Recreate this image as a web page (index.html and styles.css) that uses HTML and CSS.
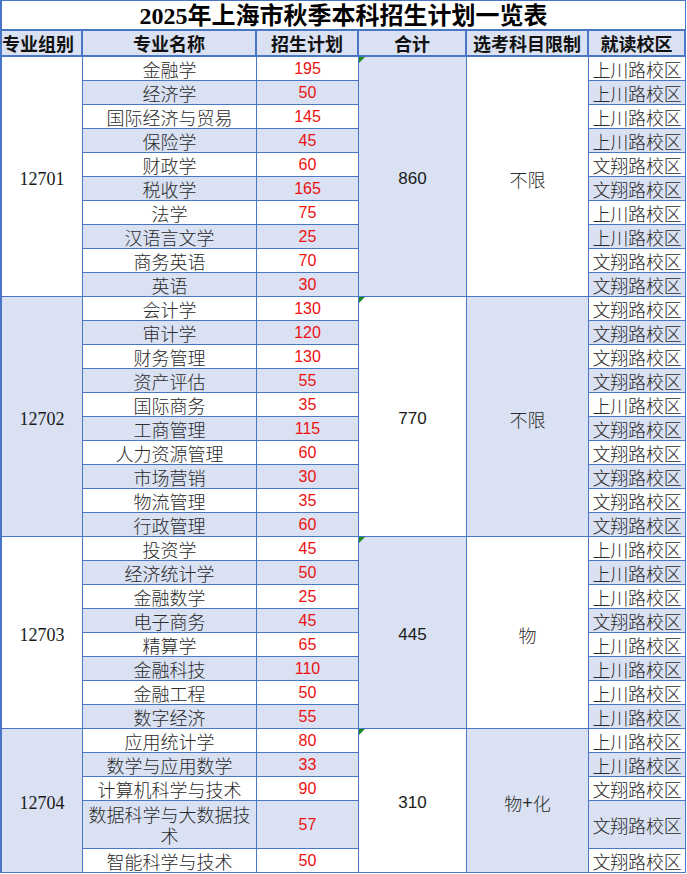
FILE: index.html
```html
<!DOCTYPE html>
<html lang="zh-CN">
<head>
<meta charset="utf-8">
<title>2025年上海市秋季本科招生计划一览表</title>
<link rel="stylesheet" href="styles.css">
</head>
<body>
<div class="sheet">
  <div class="cell title">2025年上海市秋季本科招生计划一览表</div>

  <div class="cell hd c1">专业组别</div>
  <div class="cell hd">专业名称</div>
  <div class="cell hd">招生计划</div>
  <div class="cell hd">合计</div>
  <div class="cell hd">选考科目限制</div>
  <div class="cell hd last">就读校区</div>

  <!-- group 12701 -->
  <div class="cell c1 code span10">12701</div>
  <div class="cell name">金融学</div><div class="cell num">195</div>
  <div class="cell total span10 b tri">860</div>
  <div class="cell req span10">不限</div>
  <div class="cell campus">上川路校区</div>
  <div class="cell name b">经济学</div><div class="cell num b">50</div><div class="cell campus b">上川路校区</div>
  <div class="cell name">国际经济与贸易</div><div class="cell num">145</div><div class="cell campus">上川路校区</div>
  <div class="cell name b">保险学</div><div class="cell num b">45</div><div class="cell campus b">上川路校区</div>
  <div class="cell name">财政学</div><div class="cell num">60</div><div class="cell campus">文翔路校区</div>
  <div class="cell name b">税收学</div><div class="cell num b">165</div><div class="cell campus b">文翔路校区</div>
  <div class="cell name">法学</div><div class="cell num">75</div><div class="cell campus">上川路校区</div>
  <div class="cell name b">汉语言文学</div><div class="cell num b">25</div><div class="cell campus b">上川路校区</div>
  <div class="cell name">商务英语</div><div class="cell num">70</div><div class="cell campus">文翔路校区</div>
  <div class="cell name b">英语</div><div class="cell num b">30</div><div class="cell campus b">文翔路校区</div>

  <!-- group 12702 -->
  <div class="cell c1 code span10 b">12702</div>
  <div class="cell name">会计学</div><div class="cell num">130</div>
  <div class="cell total span10 tri">770</div>
  <div class="cell req span10 b">不限</div>
  <div class="cell campus">文翔路校区</div>
  <div class="cell name b">审计学</div><div class="cell num b">120</div><div class="cell campus b">文翔路校区</div>
  <div class="cell name">财务管理</div><div class="cell num">130</div><div class="cell campus">文翔路校区</div>
  <div class="cell name b">资产评估</div><div class="cell num b">55</div><div class="cell campus b">文翔路校区</div>
  <div class="cell name">国际商务</div><div class="cell num">35</div><div class="cell campus">上川路校区</div>
  <div class="cell name b">工商管理</div><div class="cell num b">115</div><div class="cell campus b">文翔路校区</div>
  <div class="cell name">人力资源管理</div><div class="cell num">60</div><div class="cell campus">文翔路校区</div>
  <div class="cell name b">市场营销</div><div class="cell num b">30</div><div class="cell campus b">文翔路校区</div>
  <div class="cell name">物流管理</div><div class="cell num">35</div><div class="cell campus">文翔路校区</div>
  <div class="cell name b">行政管理</div><div class="cell num b">60</div><div class="cell campus b">文翔路校区</div>

  <!-- group 12703 -->
  <div class="cell c1 code span8">12703</div>
  <div class="cell name">投资学</div><div class="cell num">45</div>
  <div class="cell total span8 b tri">445</div>
  <div class="cell req span8">物</div>
  <div class="cell campus">上川路校区</div>
  <div class="cell name b">经济统计学</div><div class="cell num b">50</div><div class="cell campus b">上川路校区</div>
  <div class="cell name">金融数学</div><div class="cell num">25</div><div class="cell campus">上川路校区</div>
  <div class="cell name b">电子商务</div><div class="cell num b">45</div><div class="cell campus b">文翔路校区</div>
  <div class="cell name">精算学</div><div class="cell num">65</div><div class="cell campus">上川路校区</div>
  <div class="cell name b">金融科技</div><div class="cell num b">110</div><div class="cell campus b">上川路校区</div>
  <div class="cell name">金融工程</div><div class="cell num">50</div><div class="cell campus">上川路校区</div>
  <div class="cell name b">数字经济</div><div class="cell num b">55</div><div class="cell campus b">上川路校区</div>

  <!-- group 12704 -->
  <div class="cell c1 code span5 b">12704</div>
  <div class="cell name">应用统计学</div><div class="cell num">80</div>
  <div class="cell total span5 tri">310</div>
  <div class="cell req span5 b">物<span class="plus">+</span>化</div>
  <div class="cell campus">上川路校区</div>
  <div class="cell name b">数学与应用数学</div><div class="cell num b">33</div><div class="cell campus b">上川路校区</div>
  <div class="cell name">计算机科学与技术</div><div class="cell num">90</div><div class="cell campus">文翔路校区</div>
  <div class="cell name b wrap">数据科学与大数据技术</div><div class="cell num b">57</div><div class="cell campus b">文翔路校区</div>
  <div class="cell name">智能科学与技术</div><div class="cell num">50</div><div class="cell campus">文翔路校区</div>
</div>
</body>
</html>
```

FILE: styles.css
```css
html, body {
  margin: 0;
  padding: 0;
  background: #ffffff;
}

.sheet {
  display: grid;
  grid-template-columns: 83px 174px 102px 108px 122px 97px;
  grid-template-rows: 31px 26px repeat(31, 24px) 48px 24px;
  width: 686px;
  font-family: "Noto Sans CJK SC", sans-serif;
  font-weight: 300;
  font-size: 18px;
  color: #2a2a2a;
}

.cell {
  box-sizing: border-box;
  display: flex;
  align-items: center;
  justify-content: center;
  text-align: center;
  border-right: 1px solid #4a76c6;
  border-bottom: 1px solid #4a76c6;
  background: #ffffff;
  line-height: 22px;
  white-space: nowrap;
}

.b {
  background: #d9e1f2;
}

.title {
  grid-column: 1 / span 6;
  border-top: 1px solid #4a76c6;
  border-left: 2px solid #4a76c6;
  border-bottom: 2px solid #4a76c6;
  font-family: "Liberation Serif", "Noto Sans CJK SC", serif;
  font-weight: 700;
  font-size: 24px;
  line-height: 28px;
  color: #000000;
  padding-top: 1px;
}

.hd {
  background: #d9e1f2;
  font-weight: 700;
  color: #111111;
  border-right: 2px solid #4a76c6;
  border-bottom: 2px solid #4a76c6;
  font-size: 18px;
}

.c1 {
  border-left: 2px solid #4a76c6;
}

.hd.c1 {
  justify-content: flex-start;
}

.code {
  font-family: "Liberation Serif", serif;
  font-weight: 400;
  font-size: 18px;
  color: #1a1a1a;
  padding-top: 4px;
}

.span10 { grid-row: span 10; }
.span8 { grid-row: span 8; }
.span5 { grid-row: span 5; }

.num {
  font-family: "Liberation Sans", sans-serif;
  font-weight: 400;
  font-size: 16px;
  color: #ee1111;
}

.total {
  position: relative;
  font-family: "Liberation Sans", sans-serif;
  font-weight: 400;
  font-size: 17px;
  color: #1a1a1a;
  padding-top: 4px;
}

.tri::before {
  content: "";
  position: absolute;
  top: 0;
  left: 0;
  border-top: 6px solid #1f8a1f;
  border-right: 6px solid transparent;
}

.req {
  font-size: 18px;
  padding-top: 4px;
}

.plus {
  font-family: "Liberation Sans", sans-serif;
}

.campus {
  font-size: 18px;
  letter-spacing: -0.2px;
}

.wrap {
  white-space: normal;
  padding: 0 2px;
  line-height: 21px;
}
```
